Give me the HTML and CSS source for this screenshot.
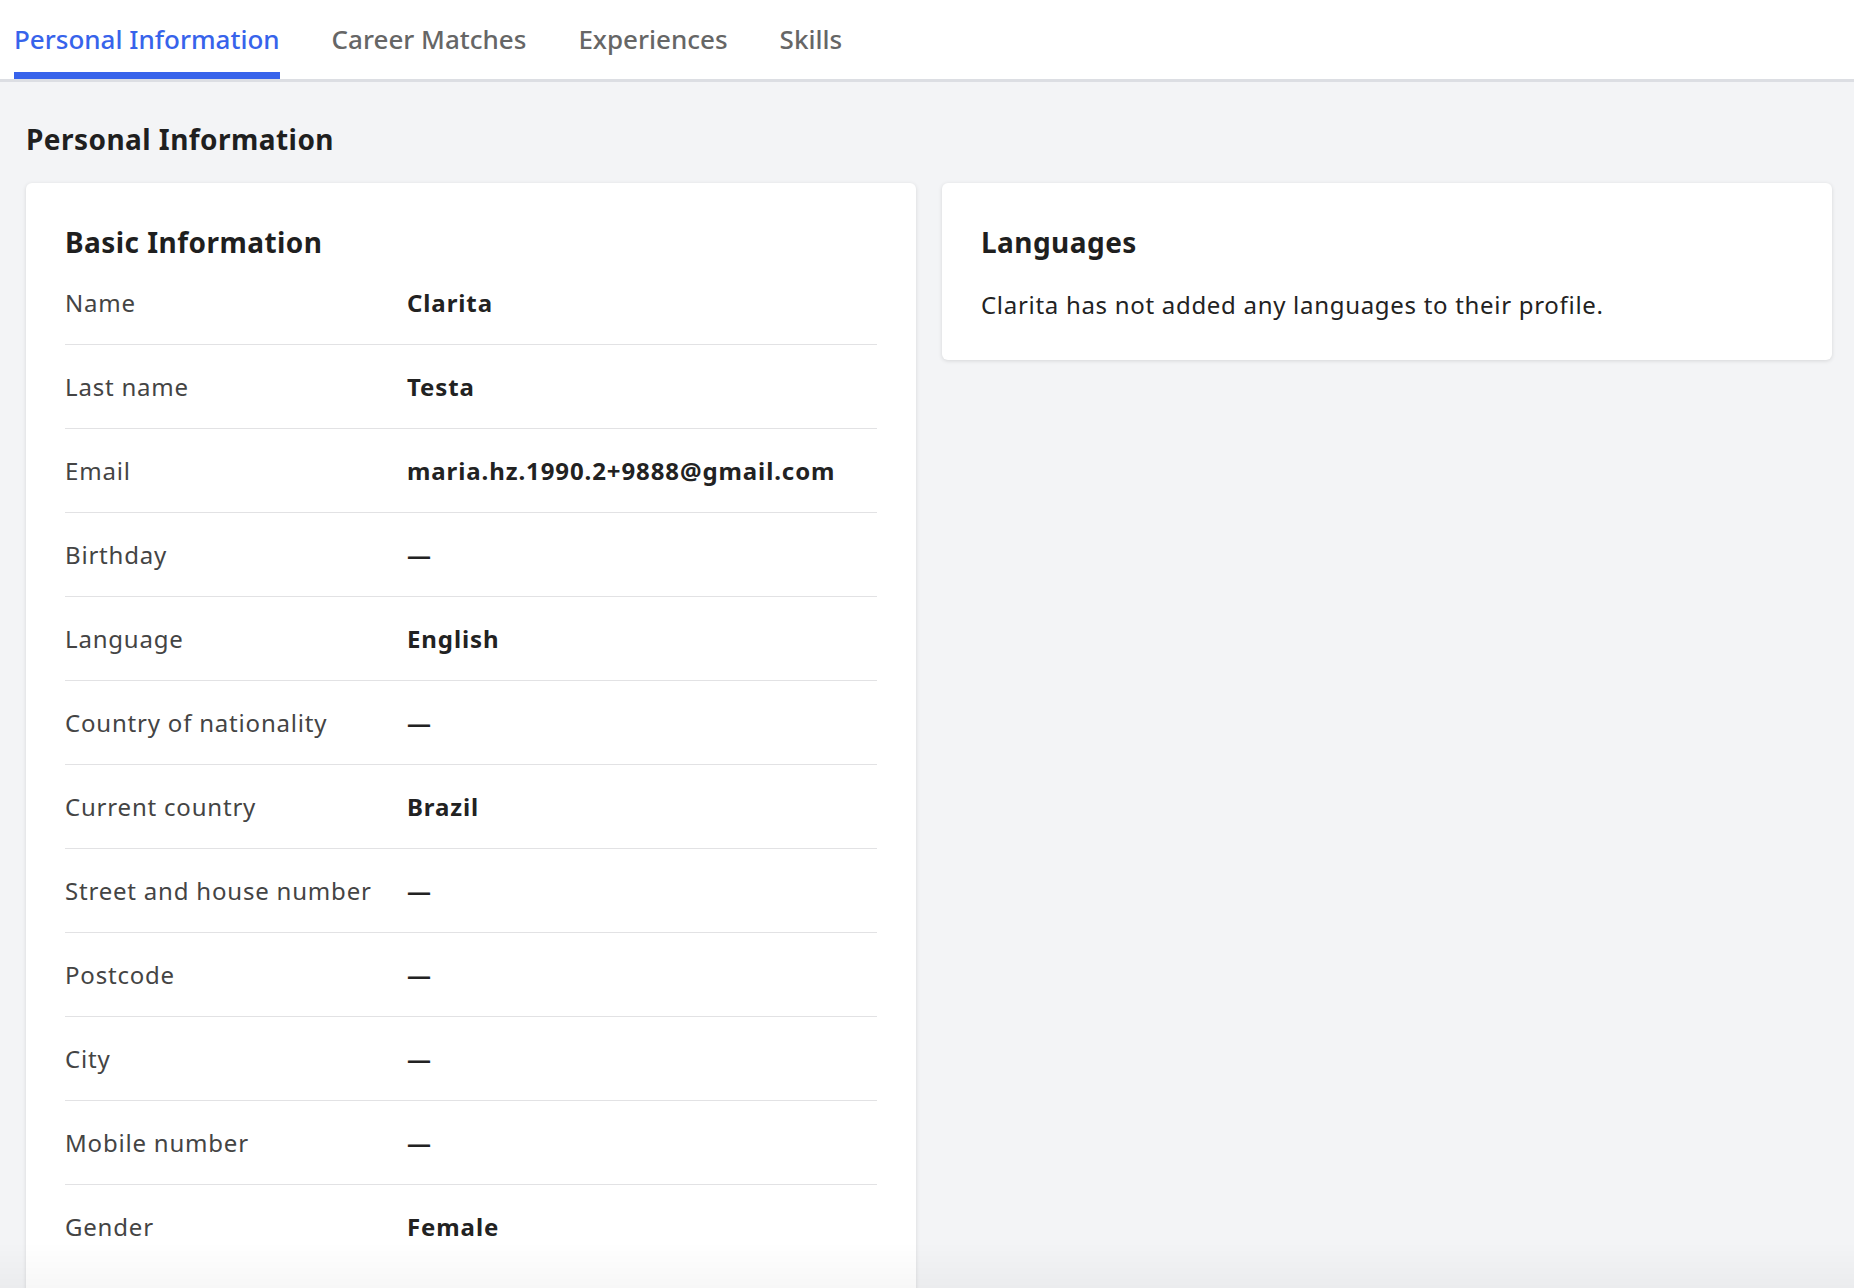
FILE: index.html
```html
<!DOCTYPE html>
<html lang="en">
<head>
<meta charset="utf-8">
<title>Personal Information</title>
<link rel="stylesheet" href="styles.css">
</head>
<body>
<nav class="tabs">
  <a class="tab active">Personal Information</a>
  <a class="tab">Career Matches</a>
  <a class="tab">Experiences</a>
  <a class="tab">Skills</a>
</nav>
<main class="page">
  <h1 class="page-title">Personal Information</h1>
  <div class="cards">
    <section class="card">
      <h2 class="card-title">Basic Information</h2>
      <dl class="rows">
        <div class="row"><dt>Name</dt><dd>Clarita</dd></div>
        <div class="row"><dt>Last name</dt><dd>Testa</dd></div>
        <div class="row"><dt>Email</dt><dd>maria.hz.1990.2+9888@gmail.com</dd></div>
        <div class="row"><dt>Birthday</dt><dd>—</dd></div>
        <div class="row"><dt>Language</dt><dd>English</dd></div>
        <div class="row"><dt>Country of nationality</dt><dd>—</dd></div>
        <div class="row"><dt>Current country</dt><dd>Brazil</dd></div>
        <div class="row"><dt>Street and house number</dt><dd>—</dd></div>
        <div class="row"><dt>Postcode</dt><dd>—</dd></div>
        <div class="row"><dt>City</dt><dd>—</dd></div>
        <div class="row"><dt>Mobile number</dt><dd>—</dd></div>
        <div class="row"><dt>Gender</dt><dd>Female</dd></div>
      </dl>
    </section>
    <section class="card card-short">
      <h2 class="card-title">Languages</h2>
      <p class="card-text">Clarita has not added any languages to their profile.</p>
    </section>
  </div>
</main>
<div class="bottom-fade"></div>
</body>
</html>
```

FILE: styles.css
```css
* { box-sizing: border-box; }

html, body {
  margin: 0;
  padding: 0;
}

body {
  background: #f3f4f6;
  font-family: "Noto Sans", "Open Sans", sans-serif;
  color: #222;
  min-height: 1288px;
}

.tabs {
  display: flex;
  gap: 52px;
  padding-left: 14px;
  background: #fff;
  border-bottom: 3px solid #dcdee3;
  height: 82px;
}

.tab {
  font-size: 26px;
  font-weight: 500;
  line-height: 35px;
  color: #666;
  padding-top: 22px;
  height: 79px;
  cursor: pointer;
}

.tab.active {
  color: #3763eb;
  border-bottom: 7px solid #3763eb;
}

.page {
  padding: 38px 22px 0 26px;
}

.page-title {
  margin: 0 0 25px 0;
  font-size: 28px;
  line-height: 38px;
  font-weight: 700;
  letter-spacing: 0.45px;
  color: #1f1f1f;
}

.cards {
  display: grid;
  grid-template-columns: 1fr 1fr;
  gap: 26px;
  align-items: start;
}

.card {
  background: #fff;
  border-radius: 6px;
  box-shadow: 0 1px 4px rgba(0, 0, 0, 0.12);
  padding: 40px 39px 40px 39px;
}

.card-short {
  padding-bottom: 39px;
}

.card-title {
  margin: 0;
  font-size: 28px;
  line-height: 38px;
  font-weight: 700;
  letter-spacing: 0.45px;
  color: #1f1f1f;
}

.card-text {
  margin: 27px 0 0 0;
  font-size: 24px;
  line-height: 33px;
  letter-spacing: 0.7px;
  color: #222;
}

.rows {
  margin: 0;
}

.row {
  display: grid;
  grid-template-columns: 342px 1fr;
  padding: 25px 0;
  border-bottom: 1px solid #e2e2e4;
  font-size: 24px;
  line-height: 33px;
  letter-spacing: 0.8px;
}

.row:last-child {
  border-bottom: none;
}

.row dt {
  color: #444;
}

.row dd {
  margin: 0;
  font-weight: 700;
  letter-spacing: 0.9px;
  color: #222;
}

.bottom-fade {
  position: fixed;
  left: 0;
  right: 0;
  bottom: 0;
  height: 46px;
  background: linear-gradient(rgba(0, 0, 0, 0), rgba(0, 0, 0, 0.03));
  pointer-events: none;
}
```
